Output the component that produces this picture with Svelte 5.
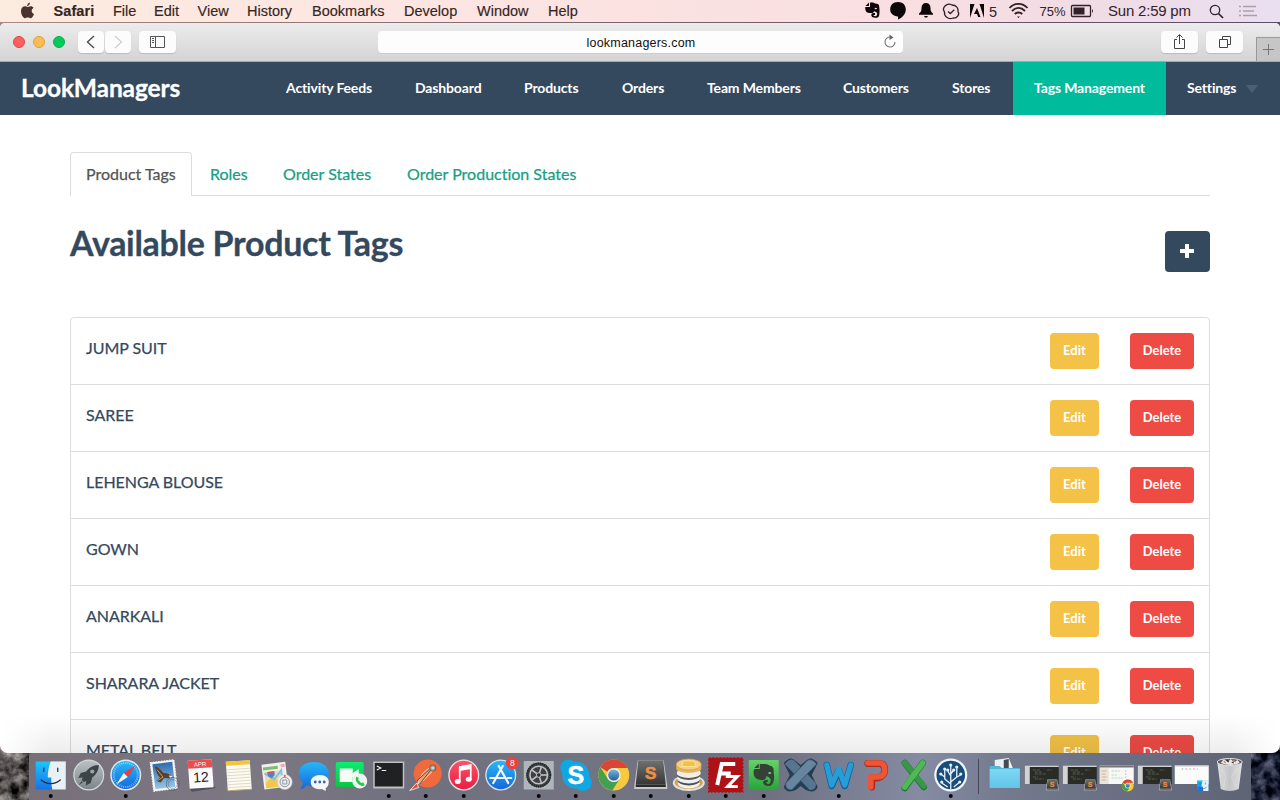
<script>
  const menus = [
    ['Safari', 59.5], ['File', 41], ['Edit', 43.5], ['View', 49.5], ['History', 65],
    ['Bookmarks', 92], ['Develop', 73], ['Window', 71], ['Help', 40]
  ];
  const nav = [
    ['Activity Feeds', 129], ['Dashboard', 109], ['Products', 98], ['Orders', 85],
    ['Team Members', 136], ['Customers', 109], ['Stores', 82], ['Tags Management', 153]
  ];
  const tabs = [['Product Tags', 122], ['Roles', 73], ['Order States', 124], ['Order Production States', 205]];
  const tags = ['JUMP SUIT', 'SAREE', 'LEHENGA BLOUSE', 'GOWN', 'ANARKALI', 'SHARARA JACKET', 'METAL BELT'];
  const apps = [
    'finder', 'launchpad', 'safari', 'mail', 'calendar', 'notes', 'maps', 'messages', 'facetime', 'terminal',
    'postman', 'itunes', 'appstore', 'settings', 'skype', 'chrome', 'sublime', 'sequel', 'filezilla', 'evernote',
    'xbench', 'word', 'powerpoint', 'excel', 'sourcetree'
  ];
  const running = ['finder', 'safari', 'terminal', 'postman', 'itunes', 'settings', 'skype', 'chrome', 'sublime', 'sequel', 'filezilla', 'evernote', 'word', 'sourcetree'];
  const docs = ['folder', 'win-code', 'win-code', 'win-chrome', 'win-code', 'win-finder', 'trash'];
  const ticks = Array.from({ length: 36 }, (_, i) => i * 10);
  const spokes = [0, 72, 144, 216, 288];
  const noteLines = [-6, -3, 0, 3, 6, 9, 12];
</script>

{#snippet finderFace()}
  <path d="M-15-13.500H15V14.500H-15z" fill="url(#finderL)" />
  <path d="M0-13.500H15V14.500H1.500C.8 11 .4 7 .5 2.500h-3.500C-3-3-2-9 0-13.500z" fill="#e9f1f8" />
  <path d="M-7-7v3.500M7-7v3.500M-9.500 5c5 4.700 14 4.700 19 0" fill="none" stroke="#17283c" stroke-width="1.200" stroke-linecap="round" />
{/snippet}

{#snippet chromeDisc()}
  <circle r="15.500" fill="#f7ca3d" />
  <path d="M-13.400-7.800A15.500 15.500 0 0 1 13.900-7H0A7 7 0 0 0-6.300-3.300z" fill="#da4635" />
  <path d="M-13.400-7.800A15.500 15.500 0 0 0-1.500 15.400L5.500 4.400A7 7 0 0 1-6.200 3.200z" fill="#459f52" />
  <circle r="7" fill="#edf1ee" />
  <circle r="5.600" fill="url(#blueBall)" />
{/snippet}

{#snippet sublimeBox()}
  <path d="M-13-14.500H13L16.500 11V14H-16.500V11z" fill="#c9c9c9" />
  <path d="M-12.500-14.500H12.500L15 9.500H-15z" fill="url(#dark)" />
  <path d="M-15 9.500H15V12H-15z" fill="#292929" />
  <text y="4" text-anchor="middle" font-size="17" font-weight="700" fill="#ef9045" stroke="#ef9045" stroke-width=".6">S</text>
{/snippet}

{#snippet appIcon(name)}
  {#if name === 'finder'}
    {@render finderFace()}
  {:else if name === 'launchpad'}
    <circle r="15.500" fill="#d4d8da" /><circle r="14.300" fill="url(#steel)" />
    <path d="M10-10C4-10 0-7-2.500-3.500L-8-2-10.500 3-6 2.500-7 5-5 7-2.500 6-3 10.500 2 8 3.500 2.500C7 0 10-4 10-10zM-7 6-10 10-6 7.500z" fill="#3e4347" />
    <circle cx="3.500" cy="-3.500" r="2.100" fill="#9ba3a8" />
  {:else if name === 'safari'}
    <circle r="15.500" fill="#e3e8ec" /><circle r="14" fill="url(#blue)" />
    {#each ticks as t}<path d="M0-13v2" stroke="#cceaff" stroke-width=".6" transform="rotate({t})" />{/each}
    <path d="M9.500-9.500 2 2-2-2z" fill="#ef3c38" /><path d="M-9.500 9.500-2-2 2 2z" fill="#f4f4f4" />
  {:else if name === 'mail'}
    <g transform="rotate(-7)">
      <path d="M-12-14H12V15H-12z" fill="#f5f5f5" stroke="#f5f5f5" stroke-dasharray="1.500 1.200" />
      <path d="M-10-12H10V13H-10z" fill="url(#sky)" />
      <path d="M-8-10C-4-8-2-5 0-2 3-2 6 0 9 3 6 4 3 4 0 3L-4 7-8 5-4 2C-7-1-7-6-8-10z" fill="#5d4029" />
      <path d="m5 1 4 1-3 2z" fill="#eee" /><path d="M-6-6-1 2M-7 5-1 2" stroke="#c6a05e" stroke-width=".9" />
    </g>
    <circle cx="9" cy="9" r="6.500" fill="none" stroke="#505764" stroke-width=".8" opacity=".8" />
    <circle cx="9" cy="9" r="4.500" fill="none" stroke="#505764" stroke-width=".7" opacity=".6" />
  {:else if name === 'calendar'}
    <g transform="rotate(-4)">
      <path d="M-12 12 12 11 14 14-10 16z" fill="#4f5359" />
      <path d="M-12-15H12V13H-12z" fill="#fafafa" />
      <path d="M-12-15H12V-7H-12z" fill="#ec4c4a" />
      <text y="-8.600" text-anchor="middle" font-size="6" fill="#fff">APR</text>
      <text y="7" text-anchor="middle" font-size="14" fill="#222">12</text>
    </g>
  {:else if name === 'notes'}
    <g transform="rotate(-4)">
      <path d="M-12-14H12V15H-12z" fill="#fcfaf1" /><path d="M-12-14H12V-10H-12z" fill="#f4c43e" />
      {#each noteLines as y}<path d="M-12 {y}H12" stroke="#d5cfba" stroke-width=".7" />{/each}
      <path d="M-12 15H12" stroke="#b8a66e" />
    </g>
  {:else if name === 'maps'}
    <g transform="rotate(-7)">
      <path d="M-13-12H11V13H-13z" fill="#f1f0e9" />
      <path d="M-12-9H3V-6H-12z" fill="#7bc16b" />
      <path d="M-11-4H5V12H-11z" fill="#e7dcb9" /><path d="M-11 7-3 1 6 12H-11z" fill="#f3c748" />
      <path d="M-11-3-2 4 6-4V2L1 7" fill="none" stroke="#82c2e9" stroke-width="2" />
      <path d="M-8-4h7v4l-3.500 3L-8 0z" fill="#5482c4" /><path d="M-8-4h7v1.500h-7z" fill="#ca5963" />
      <path d="M6-10h4v3H6z" fill="#eca9ae" />
    </g>
    <circle cx="9" cy="7" r="7.500" fill="#eceef0" stroke="#c7cacc" stroke-width=".5" />
    <circle cx="9" cy="7" r="4.700" fill="none" stroke="#8d9aa5" /><path d="M7 5h4v4H7z" fill="none" stroke="#65798a" stroke-width=".7" />
    <circle cx="9" cy="1" r="1" fill="#e64c43" />
  {:else if name === 'messages'}
    <path d="M0-13C10-13 15-8 15-1 15 7 9 11 0 11-3 11-5 11-7 10-9 13-12 14-14 14-11 12-11 9-11 7-20-2-13-13 0-13z" fill="url(#blue)" />
    <path d="M6 0C12 0 15 3 15 7c0 3-1 5-3 6v3l-4-2C2 15-3 12-3 7-3 3 1 0 6 0z" fill="#f4f7f8" />
    <circle cx="1.500" cy="7" r="1.400" fill="#326aa3" /><circle cx="6" cy="7" r="1.400" fill="#326aa3" /><circle cx="10.500" cy="7" r="1.400" fill="#326aa3" />
  {:else if name === 'facetime'}
    <rect x="-15" y="-13" width="28" height="25" rx="2" fill="url(#green)" />
    <path d="M-11-6.500H2V-2L8-6V5L2 2V7H-11z" fill="#f5fbf5" />
    <circle cx="9" cy="6" r="7.500" fill="#f0f2ef" />
    <path d="M5.500 1.500 8 3 7.500 5 10.500 8 12.500 7.500 14 10C11 13 5 8 5 4z" fill="#29c653" />
  {:else if name === 'terminal'}
    <path d="M-15.500-13.500H15.500V13.500H-15.500z" fill="#bfc0c1" />
    <path d="M-14-12H14V11.500H-14z" fill="#202122" />
    <path d="m-12-9 4 2-4 2m5 .5h4.500" fill="none" stroke="#ededed" stroke-width="1.200" />
  {:else if name === 'postman'}
    <circle cx="2" cy="-1.500" r="14" fill="#f06a3c" />
    <path d="M4-7C-2-4-5 0-8 9L-3 6 7-4z" fill="#f0a06f" stroke="#f6e2d1" stroke-width=".8" />
    <path d="M5-5-6 9M4-6-9 6" fill="none" stroke="#4d4140" stroke-width=".9" />
    <path d="m-9 8-7 7.500 9-3z" fill="#e1523c" stroke="#eee6de" stroke-width=".9" />
    <circle cx="7" cy="-7" r="3.200" fill="#a89f94" stroke="#5b534e" stroke-width=".8" /><circle cx="7" cy="-7" r="1.300" fill="#ded6c8" />
  {:else if name === 'itunes'}
    <circle r="15.500" fill="#e8e8ec" /><circle r="14.200" fill="url(#red)" />
    <path d="M-4 6V-8L7-10V4" fill="none" stroke="#fff" stroke-width="1.700" /><path d="M-4-8.500 7-10.500V-6L-4-4z" fill="#fff" />
    <ellipse cx="-6" cy="6.500" rx="3" ry="2.500" fill="#fff" /><ellipse cx="5" cy="4.300" rx="3" ry="2.500" fill="#fff" />
  {:else if name === 'appstore'}
    <circle r="15.500" fill="#d9e4ed" /><circle r="14.200" fill="url(#blue)" />
    <path d="M-7.500 8 2-9M7.500 8-2-9M-10.500 3H3M7 3h3.500" fill="none" stroke="#f5f8fa" stroke-width="2.200" stroke-linecap="round" />
    <circle cx="11.500" cy="-12" r="6.500" fill="#e5443f" />
    <text x="11.500" y="-9" font-size="8.500" text-anchor="middle" fill="#fff">8</text>
  {:else if name === 'settings'}
    <path d="M-15-14H15V14.500H-15z" fill="#aeb6bb" />
    <circle r="12.500" fill="#44484b" /><circle r="11.500" fill="none" stroke="#202325" stroke-width="2" stroke-dasharray="1.200 1" />
    <circle r="8.800" fill="#3c4043" stroke="#c0c2c3" stroke-width="1.600" />
    {#each spokes as s}<path d="M0 0V-8.500" stroke="#b8bbbd" stroke-width="1.700" transform="rotate({s + 18})" />{/each}
    <circle r="2.300" fill="#333" stroke="#b8bbbd" />
  {:else if name === 'skype'}
    <circle r="13.500" fill="#0fa8e4" /><circle cx="-7.500" cy="-7.500" r="8" fill="#0fa8e4" /><circle cx="7.500" cy="7.500" r="8.500" fill="#0fa8e4" />
    <text y="8.500" text-anchor="middle" font-size="25" font-weight="700" fill="#fff" stroke="#fff" stroke-width=".5">S</text>
  {:else if name === 'chrome'}
    {@render chromeDisc()}
  {:else if name === 'sublime'}
    {@render sublimeBox()}
  {:else if name === 'sequel'}
    <ellipse cx="0" cy="8" rx="16" ry="8" fill="#e1e1e0" />
    <ellipse cx="0" cy="7.500" rx="14" ry="6.500" fill="#d3a24c" />
    <ellipse cx="0" cy="8.500" rx="11" ry="5" fill="#f2f2f2" /><ellipse cx="0" cy="5.500" rx="11" ry="5" fill="#4f5052" />
    <ellipse cx="0" cy="3.500" rx="11.500" ry="5" fill="#f0f0f0" /><ellipse cx="0" cy="0" rx="11.500" ry="5" fill="#555759" />
    <ellipse cx="0" cy="-2" rx="12" ry="5" fill="#f2eee5" />
    <path d="M-12.500-10V-6C-11-1 11-1 12.500-6V-10z" fill="#e5b55a" /><ellipse cx="0" cy="-10.500" rx="12.500" ry="5.500" fill="#f3d08a" stroke="#d99d36" stroke-width=".8" />
    <path d="M-5.500-14H5.500L7-8.500H-7z" fill="#f4c13f" stroke="#fbe8a9" stroke-width=".8" />
  {:else if name === 'filezilla'}
    <path d="M-17-17H17V17H-17z" fill="#ae1217" stroke="#ae1217" stroke-dasharray="2 1.500" stroke-width="1.500" />
    <path d="M-8.500 10-4-11H9.500M-5.500-1.500H5" fill="none" stroke="#fff" stroke-width="4" />
    <path d="M0 1.500H11.500L2 11.500H12" fill="none" stroke="#fff" stroke-width="3.200" />
  {:else if name === 'evernote'}
    <rect x="-15" y="-15" width="30" height="30" rx="1" fill="url(#green2)" />
    <path d="M-4-11H1.500C4-11 5-9.500 7-9 10-8.500 10-5 10-2 11 4 10 11 5 11 1 11-1 9-.5 6.500 0 5 2 5 4 5L4 7H2.500Q2 9 4.500 9 7 9 7 4.500 6 2 3 1 2 4 0 5C-3 5-8 5-9.500 1-10.500-2-10.500-5-9-6H-4z" fill="#354137" />
    <path d="M-9.500-7-5-11.500V-7z" fill="#354137" /><ellipse cx="6" cy="-2" rx="1.600" ry="1" fill="#63d46b" />
  {:else if name === 'xbench'}
    <path d="M-17-12Q-10-20-5-14L0-10 5-14Q10-20 17-12L11 0 17 12Q14 19 5 15L0 11-5 15Q-14 19-17 12L-11 0z" fill="#243d54" />
    <path d="M-16-11Q-10-18-6-14L15 8Q16 15 9 15z" fill="#58758f" />
    <path d="M16-11Q10-18 6-14L-15 8Q-16 15-9 15z" fill="#6885a0" stroke="#2f4961" stroke-width=".7" />
  {:else if name === 'word'}
    <path d="M-12-10-7 11 0-5 6 11 12-10" fill="none" stroke="#105f9e" stroke-width="6.500" stroke-linejoin="round" stroke-linecap="round" />
    <path d="M-12-10-7 10 0-6 6 10 12-10" fill="none" stroke="#279dd8" stroke-width="5.200" stroke-linejoin="round" stroke-linecap="round" />
  {:else if name === 'powerpoint'}
    <path d="M-8-11.500H4Q9-11 9-5T2 3H-4V12" fill="none" stroke="#a82e1d" stroke-width="6.800" stroke-linejoin="round" stroke-linecap="round" />
    <path d="M-8-12H4Q9-11.500 9-5T2 2H-5V12" fill="none" stroke="#ef5435" stroke-width="5.500" stroke-linejoin="round" stroke-linecap="round" />
  {:else if name === 'excel'}
    <path d="M-9-12 10 12M9-12-9 13" stroke="#227936" stroke-width="6.500" stroke-linecap="round" />
    <path d="M-9-12 10 11" stroke="#379948" stroke-width="5.500" stroke-linecap="round" /><path d="M9-12-9 12" stroke="#4fba54" stroke-width="5.500" stroke-linecap="round" />
  {:else if name === 'sourcetree'}
    <circle r="16.500" fill="#f3f5f7" /><circle r="14.300" fill="#174c7c" />
    <path d="M0 14V-9M0 9-6 4V-5M0 7 6 2V-7M-6 2-10-1M6 2 10 0M0 1-3-4M0-1 3-5M-3 12-9 8M3 12 9 7" fill="none" stroke="#e7eff6" stroke-width="1.300" />
    {#each [[0,-10],[-6,-6],[6,-8],[-10,-1],[10,-1],[-3,-5],[3,-5],[-9,7],[9,7]] as [cx, cy]}<circle {cx} {cy} r="1.600" fill="#e7eff6" />{/each}
  {:else if name === 'folder'}
    <path d="M-10-15 4-17 8-7V0H-10z" fill="#eceff1" /><path d="M-1-15 4-16V-6H-1z" fill="#474b50" />
    <path d="M-15-9H-5L-3-7H15V13H-15z" fill="#55b6dc" /><path d="M-15-6H15V13H-15z" fill="url(#folder)" />
  {:else if name === 'win-code'}
    <path d="M-17-9.500H17V9H-17z" fill="#292b26" /><path d="M-17-9.500H17V-8H-17zM-17-9.500H-12V9H-17z" fill="#d1d2d2" />
    <path d="M-9-5H-2M-7-3H0M-7-1H4M-9 2H-4M-7 4H2M5-5h5" stroke="#6b745c" stroke-width=".7" stroke-dasharray="3 1" />
    <g transform="translate(10.500 10) scale(.38)">{@render sublimeBox()}</g>
  {:else if name === 'win-chrome'}
    <path d="M-17-9.500H17V9H-17z" fill="#f7f7f7" /><path d="M-17-9.500H17V-7.500H-17z" fill="#77777b" />
    <path d="M-17-7H-8V9H-17z" fill="#e9e5dc" />
    <path d="M-15-4h5M-15-1h4M-15 2h5M-15 5h4" stroke="#d7ab6d" stroke-width=".8" /><path d="M-5-4H3M-5 0H1M-5 3H7M9-5V3" stroke="#a9ceb1" stroke-width=".8" stroke-dasharray="2 1" />
    <g transform="translate(11 10.500) scale(.38)">{@render chromeDisc()}</g>
  {:else if name === 'win-finder'}
    <path d="M-17-9.500H17V9H-17z" fill="#fbfbfb" /><path d="M-17-9.500H17V-8.500H-17z" fill="#c5c7cb" />
    <path d="M-10-6H6" stroke="#aaa3ad" stroke-width="1.200" stroke-dasharray="1.500 2.300" />
    <g transform="translate(11 10.500) scale(.38)">{@render finderFace()}</g>
  {:else if name === 'trash'}
    <path d="M-12.500-13H12.500L9 14Q0 18-9 14z" fill="url(#bin)" />
    <ellipse cx="0" cy="-13" rx="12.500" ry="3.500" fill="#555960" stroke="#e3e4e6" />
    <path d="m-9-12 3-4 4 3 3-3 3 3 4-2 2 3q-9 4-19 0z" fill="#e8e8e5" /><path d="m-6-14 2 2m7-3 3 2" stroke="#d48c42" stroke-width="1.300" /><path d="m-3-15 2 2m3 0 2 1" stroke="#333" stroke-width="1.200" />
    <path d="M-8-6-4 1-6 12M7-7 2 2 6 12" fill="none" stroke="#eee" opacity=".35" />
  {/if}
{/snippet}

{#snippet slot(name, dot)}
  <svg class="slot" viewBox="-18.750 -22 37.500 47">
    {@render appIcon(name)}
    {#if dot}<circle cy="21" r="2" fill="#08080b" />{/if}
  </svg>
{/snippet}

<div class="screen">
  <svg class="defs" width="0" height="0">
    <defs>
      <linearGradient id="finderL" x2="0" y2="1"><stop stop-color="#1cc5fb" /><stop offset="1" stop-color="#1673e5" /></linearGradient>
      <linearGradient id="steel" x2="0" y2="1"><stop stop-color="#bac0c2" /><stop offset="1" stop-color="#7d878b" /></linearGradient>
      <linearGradient id="blue" x2="0" y2="1"><stop stop-color="#27b8f7" /><stop offset="1" stop-color="#1668dc" /></linearGradient>
      <linearGradient id="sky" x2="0" y2="1"><stop stop-color="#2e6db2" /><stop offset="1" stop-color="#92c5e8" /></linearGradient>
      <linearGradient id="green" x2="0" y2="1"><stop stop-color="#0cec70" /><stop offset="1" stop-color="#0bc543" /></linearGradient>
      <linearGradient id="green2" x2="0" y2="1"><stop stop-color="#65d269" /><stop offset="1" stop-color="#27a43b" /></linearGradient>
      <linearGradient id="red" x2="0" y2="1"><stop stop-color="#fb5368" /><stop offset="1" stop-color="#ec1c40" /></linearGradient>
      <linearGradient id="dark" x2="0" y2="1"><stop stop-color="#707070" /><stop offset="1" stop-color="#373737" /></linearGradient>
      <linearGradient id="blueBall" x2="0" y2="1"><stop stop-color="#79b4df" /><stop offset="1" stop-color="#245f9d" /></linearGradient>
      <linearGradient id="folder" x2="0" y2="1"><stop stop-color="#7fd7f4" /><stop offset="1" stop-color="#62c4e9" /></linearGradient>
      <linearGradient id="bin" x2="1" y2="0"><stop stop-color="#dcdddd" /><stop offset=".5" stop-color="#c4c5c7" /><stop offset="1" stop-color="#e0e1e2" /></linearGradient>
      <filter id="rockWarm" x="0" y="0" width="1" height="1" color-interpolation-filters="sRGB"><feTurbulence type="fractalNoise" baseFrequency=".09" numOctaves="4" seed="8" /><feColorMatrix values="1.100 0 0 0 -.22  1.080 0 0 0 -.23  1.050 0 0 0 -.22  0 0 0 0 1" /></filter>
      <filter id="rockCool" x="0" y="0" width="1" height="1" color-interpolation-filters="sRGB"><feTurbulence type="fractalNoise" baseFrequency=".09" numOctaves="4" seed="3" /><feColorMatrix values=".8 0 0 0 -.28  .8 0 0 0 -.26  .85 0 0 0 -.21  0 0 0 0 1" /></filter>
    </defs>
  </svg>

  <header class="menubar">
    <svg class="apple" viewBox="0 0 13 17"><path d="M9 .5C8.900 2.500 7.800 4 6.100 4.200 6.200 2.200 7.300.9 9 .5zM6.600 5C7.400 5 8.300 4.100 9.800 4.200 11 4.200 12 4.800 12.600 5.700 9.900 7.300 10.200 10.700 13 12 12.400 13.900 11.100 16 9.700 16.200 8.600 16.300 8.100 15.500 6.800 15.500S4.900 16.200 3.900 16.200C2.200 16.200 0 12.500 0 9.300 0 6.100 1.900 4.300 4 4.300 5.100 4.300 6 5 6.600 5z" /></svg>
    {#each menus as [label, w], i}<span class:bold={i === 0} style:width="{w}px">{label}</span>{/each}
    <svg class="status" viewBox="860 0 420 22">
      <g fill="#0d070a">
        <path d="m865.500 6 3.500-3.500V6z" />
        <path d="M870 2.500h3c1 0 1.500.8 2 1 3 .3 4 .7 4.200 3 .5 3.500.5 7-.2 9.500-.5 1.500-2 1.800-3.500 1.800-3 0-4.500-1.300-4.200-3.300.2-1.200 1.500-1.500 3.700-1.500V15h-1.500c0 .8.500 1.200 1.700 1.200 1.500 0 2-1 2-2.700-.5-1.500-2-2-3.200-2.300-.3 1-1 1.800-2 1.800-2 .2-4.500 0-5.500-1-1.300-1.500-1.300-3.500-1.200-5H870z" />
        <path d="M898 2c5 0 7.800 3 7.800 7.500 0 4-3 8-7.800 10V16.500c-5-.5-7.800-3-7.800-7C890.200 5 893 2 898 2z" />
        <path d="M926 3c3 0 4.500 2 4.500 5 0 3 .5 4 2.500 5.500v1.300h-14v-1.300c2-1.500 2.500-2.500 2.500-5.500 0-3 1.500-5 4.500-5zM924 16h4l-1 1.500h-2z" />
        <path d="M970 4h4.500L970 18zM979.500 4h4.500v14zM977 8l3.500 9h-2.300L977 14h-3z" />
      </g>
      <ellipse cx="875.800" cy="8.500" rx="1.200" ry=".8" fill="#f6dce1" />
      <g fill="none" stroke="#322129" stroke-width="1.300">
        <path d="M945 6c2-2 5-2 7-1 4 0 6.500 3 6 6.500 2 3-1 7-5 6.500-5 2-9-2-8.500-6-1.500-2-1-4.500.5-6z" /><path d="m948 11.500 2.300 2 4-3.800" />
        <path d="M1009.500 8c5-5.500 13-5.500 18 0M1012 11c4-4 9-4 13 0M1014.800 14c2-2 5.500-2 7.500 0" stroke-width="1.800" />
        <rect x="1071.500" y="5.500" width="19" height="11" rx="1" /><circle cx="1215" cy="10" r="4.700" /><path d="m1218.500 13.500 4.500 4.500" stroke-width="1.700" />
      </g>
      <path d="M1017 16.500h3l-1.500 1.500zM1073.500 7.500h11v7h-11zM1092 9q2 2 0 4z" fill="#322129" />
      <path d="M1239 6.500h2m2 0h13M1239 11h2m2 0h11M1239 15.500h2m2 0h14" stroke="#aaa0aa" stroke-width="1.500" />
      <text x="989" y="17" font-size="14.500">5</text>
      <text x="1039.500" y="15.500" font-size="13" textLength="26">75%</text>
      <text x="1108" y="16" font-size="15" textLength="83">Sun 2:59 pm</text>
    </svg>
  </header>

  <section class="window">
    <div class="toolbar">
      <div class="lights"><i class="r"></i><i class="y"></i><i class="g"></i></div>
      <div class="backfwd">
        <button aria-label="Back"><svg viewBox="0 0 26 22"><path d="m16 5-6.500 6L16 17" stroke="#4d4d4d" stroke-width="1.400" /></svg></button>
        <button aria-label="Forward"><svg viewBox="0 0 26 22"><path d="m10 5 6.500 6L10 17" stroke="#cecece" stroke-width="1.200" /></svg></button>
      </div>
      <button class="side" aria-label="Sidebar"><svg viewBox="0 0 37 22"><path d="M11.500 5.500h14v11h-14zM16.500 5.500v11M13 7.500h2M13 9.500h2M13 11.500h2" stroke="#555" /></svg></button>
      <div class="address"><span>lookmanagers.com</span>
        <svg viewBox="0 0 14 16"><path d="M7.500 3A5 5 0 1 0 12 8" stroke="#777" stroke-width="1.100" /><path d="m6.500.5 4 3-4 2.500z" fill="#666" stroke="none" /></svg>
      </div>
      <button class="share" aria-label="Share"><svg viewBox="0 0 37 22"><path d="M16 8.500h-2.500v9h10v-9H21M18.500 13V4M15.500 6.500l3-3 3 3" stroke="#444" /></svg></button>
      <button class="pages" aria-label="Tabs"><svg viewBox="0 0 37 22"><path d="M13.500 8.500h8v8h-8zM16.500 8V5.500h8v8H22" stroke="#444" /></svg></button>
      <div class="newtab"><svg viewBox="0 0 23 24"><path d="M6 11.500h11M11.500 6v11" stroke="#777" /></svg></div>
    </div>

    <nav>
      <div class="brand">LookManagers</div>
      {#each nav as [label, w], i}<div class="item" class:active={i === 7} style:width="{w}px"><span>{label}</span></div>{/each}
      <div class="item last"><span>Settings</span><b></b></div>
    </nav>

    <main>
      <div class="tabs">
        {#each tabs as [label, w], i}<div class="tab" class:current={i === 0} style:width="{w}px"><span>{label}</span></div>{/each}
      </div>
      <div class="heading">
        <h1>Available Product Tags</h1>
        <button aria-label="Add"><svg viewBox="0 0 14 14"><path d="M0 5h5V0h4v5h5v4H9v5H5V9H0z" fill="#fff" /></svg></button>
      </div>
      <div class="list">
        {#each tags as tag}
          <div class="row"><span class="name">{tag}</span><button class="edit">Edit</button><button class="delete">Delete</button></div>
        {/each}
      </div>
    </main>
    <div class="shade"></div>
  </section>

  <footer>
    <svg class="rock" width="1280" height="50"><rect width="640" height="50" filter="url(#rockWarm)" /><rect x="640" width="640" height="50" filter="url(#rockCool)" /></svg>
    <div class="dock">
      {#each apps as app}{@render slot(app, running.includes(app))}{/each}
      <i class="divider"></i>
      {#each docs as doc}{@render slot(doc, false)}{/each}
    </div>
  </footer>
</div>

<style>
  :global(body) { margin: 0; overflow: hidden; }
  .screen { position: relative; width: 1280px; height: 800px; overflow: hidden; background: linear-gradient(90deg, #a88780, #6d5466 70%, #5c4c68); font-family: Lato, sans-serif; font-variant-ligatures: none; }
  .screen * { box-sizing: border-box; }
  .defs { position: absolute; }
  button { border: 0; padding: 0; font-family: inherit; }
  .menubar { height: 22px; display: flex; align-items: center; padding-left: 21px; background: linear-gradient(90deg, #fcebdf, #fde6e2 30%, #f9dfe1 70%, #f1dce5 85%, #e9dff0); font: 14.500px/22px "Liberation Sans", sans-serif; color: #352521; white-space: nowrap; -webkit-text-stroke: .15px; }
  .apple { width: 13px; height: 17px; margin: -2px 19.500px 0 0; fill: #4a332e; }
  .bold { font-weight: 700; letter-spacing: .1px; }
  .status { width: 420px; height: 22px; margin-left: auto; fill: #352129; }

  .window { position: relative; z-index: 1; margin-top: 1px; height: 730px; display: flex; flex-direction: column; border-radius: 5px 5px 8px 8px; background: #fff; overflow: hidden; }
  .toolbar { flex: none; height: 39px; display: flex; align-items: flex-start; padding: 8px 0 0 13px; background: linear-gradient(#ececec, #d4d4d4); border-bottom: 1px solid #a5a8aa; }
  .toolbar svg { fill: none; display: block; }
  .lights { display: flex; gap: 8px; padding-top: 5px; width: 65px; }
  .lights i { width: 12px; height: 12px; border-radius: 50%; border: 1px solid #df4744; background: #fc605c; }
  .lights .y { background: #fdbc50; border-color: #df9f40; }
  .lights .g { background: #00cb5b; border-color: #12ac48; }
  .toolbar button { height: 22px; background: #fcfcfc; border-radius: 4px; box-shadow: 0 1px 1px #bbb; }
  .backfwd { display: flex; gap: 1px; width: 61px; }
  .backfwd button { width: 26px; }
  .side, .share, .pages { width: 37px; }
  .address { margin-left: 202px; width: 525px; height: 22px; border-radius: 4px; background: #fdfdfd; display: flex; align-items: center; justify-content: center; position: relative; font: 12.500px "Liberation Sans", sans-serif; color: #111; box-shadow: 0 1px 0 #ccc; }
  .address span { padding: 2px 0 0 1px; letter-spacing: .2px; }
  .address svg { position: absolute; width: 14px; height: 16px; right: 6px; top: 3px; }
  .share { margin-left: 258px; }
  .pages { margin-left: 8px; }
  .newtab { margin: 6px 0 0 13px; width: 24px; height: 24px; border: 1px solid #999; border-right: 0; border-bottom: 0; background: #c6c6c6; }

  nav { flex: none; height: 53px; display: flex; background: #34495e; color: #fff; }
  .brand { width: 265px; padding-left: 21px; font-size: 24.500px; line-height: 51px; font-weight: 700; letter-spacing: -.12px; -webkit-text-stroke: .3px; }
  .item { flex: none; display: flex; align-items: center; padding: 0 0 2px 21px; font-size: 14px; font-weight: 700; letter-spacing: -.14px; white-space: nowrap; }
  .active { background: #00bc9c; }
  .last b { margin: 2px 0 0 10px; border: 6px solid transparent; border-top: 8px solid #4b6075; border-bottom: 0; }

  main { padding: 37px 70px 0; color: #34495e; }
  .tabs { height: 44px; display: flex; border-bottom: 1px solid #ddd; }
  .tab { height: 44px; padding: 0 0 0 18px; line-height: 43px; font-size: 16px; color: #16a085; white-space: nowrap; -webkit-text-stroke: .25px; }
  .current { padding-left: 15px; line-height: 41px; color: #555; background: #fff; border: 1px solid #ddd; border-bottom: 0; border-radius: 4px 4px 0 0; }
  .heading { height: 121px; padding-top: 27px; display: flex; justify-content: space-between; }
  h1 { margin: -1px 0 0; font-size: 34px; line-height: 42px; font-weight: 700; letter-spacing: -.29px; -webkit-text-stroke: .3px; }
  .heading button { margin-top: 8px; width: 45px; height: 41px; padding: 0 2px 2px 0; border-radius: 4px; background: #34495e; display: grid; place-items: center; }
  .heading svg { width: 14px; height: 14px; }
  .list { border: 1px solid #ddd; border-radius: 4px; }
  .row { height: 67px; display: flex; align-items: flex-start; padding: 15px 15px 0; border-bottom: 1px solid #ddd; }
  .name { flex: 1; line-height: 29px; font-size: 16px; letter-spacing: -.04px; -webkit-text-stroke: .25px; }
  .row button { height: 36px; padding-bottom: 2px; border-radius: 4px; color: #fff; font-size: 13px; line-height: 34px; font-weight: 700; }
  .row .edit { width: 49px; background: #f3c246; margin-right: 31px; }
  .row .delete { width: 64px; background: #ee4b45; }
  .shade { position: absolute; inset: auto 0 0; height: 38px; background: linear-gradient(transparent, rgba(0, 0, 0, .07)); mask-image: linear-gradient(90deg, transparent, #000 50px, #000 1230px, transparent); }

  footer { position: relative; margin-top: -3px; height: 50px; }
  .rock { position: absolute; inset: 0; }
  .dock { position: relative; margin: 0 29px; padding-left: 3px; height: 50px; padding-top: 3px; display: flex; overflow: hidden; }
  .dock::before { content: ""; position: absolute; inset: 3px 0 0; border-radius: 4px 4px 0 0; background: linear-gradient(90deg, #777079, #7c7883 18%, #70707f 32%, #737481 48%, #6e7080 60%, #858ba3 73%, #737a8d 80%, #5f6475 100%); }
  .slot { position: relative; flex: none; width: 37.500px; height: 47px; font-family: "Liberation Sans", sans-serif; }
  .slot text { -webkit-text-stroke: 0; }
  .divider { position: relative; flex: none; width: 1px; height: 35px; margin: 6px 7px 0 8px; background: #454b5b; }
</style>
